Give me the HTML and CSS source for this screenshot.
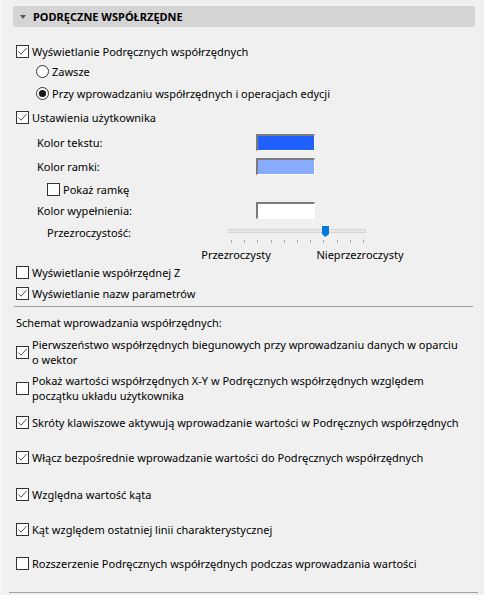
FILE: index.html
```html
<!DOCTYPE html>
<html lang="pl">
<head>
<meta charset="utf-8">
<link rel="stylesheet" href="styles.css">
</head>
<body>
<div class="page">
  <section class="panel">
    <div class="header"><span class="tri"></span><span>PODRĘCZNE WSPÓŁRZĘDNE</span></div>

    <div class="opt cb1">
      <svg class="box" viewBox="0 0 13 13"><rect x=".5" y=".5" width="12" height="12" fill="#fff" stroke="#333"/><path d="M2.5 6.5 5 9.2 10.6 3" fill="none" stroke="#555"/></svg>
      <span>Wyświetlanie Podręcznych współrzędnych</span>
    </div>
    <div class="opt radio r1">
      <svg class="box" viewBox="0 0 13 13"><circle cx="6.5" cy="6.5" r="6" fill="#fff" stroke="#333"/></svg>
      <span>Zawsze</span>
    </div>
    <div class="opt radio r2">
      <svg class="box" viewBox="0 0 13 13"><circle cx="6.5" cy="6.5" r="6" fill="#fff" stroke="#333"/><circle cx="6.5" cy="6.5" r="3.6" fill="#1a1a1a"/></svg>
      <span>Przy wprowadzaniu współrzędnych i operacjach edycji</span>
    </div>
    <div class="opt ustaw">
      <svg class="box" viewBox="0 0 13 13"><rect x=".5" y=".5" width="12" height="12" fill="#fff" stroke="#333"/><path d="M2.5 6.5 5 9.2 10.6 3" fill="none" stroke="#555"/></svg>
      <span>Ustawienia użytkownika</span>
    </div>

    <div class="color-row c1">
      <span class="color-label">Kolor tekstu:</span>
      <span class="swatch swatch-text"></span>
    </div>
    <div class="color-row c2">
      <span class="color-label">Kolor ramki:</span>
      <span class="swatch swatch-frame"></span>
    </div>
    <div class="opt pokaz">
      <svg class="box" viewBox="0 0 13 13"><rect x=".5" y=".5" width="12" height="12" fill="#fff" stroke="#333"/></svg>
      <span>Pokaż ramkę</span>
    </div>
    <div class="color-row c3">
      <span class="color-label">Kolor wypełnienia:</span>
      <span class="swatch swatch-fill"></span>
    </div>

    <div class="slider-row">
      <span class="slider-label">Przezroczystość:</span>
      <div class="slider">
        <div class="track"></div>
        <svg class="thumb" viewBox="0 0 7 11"><path d="M0 0H7V8L3.5 11 0 8Z" fill="#0078d7"/></svg>
        <div class="ticks"><i></i><i></i><i></i><i></i><i></i><i></i><i></i><i></i><i></i><i></i><i></i></div>
      </div>
    </div>
    <div class="captions">
      <span class="cap1">Przezroczysty</span>
      <span class="cap2">Nieprzezroczysty</span>
    </div>

    <div class="opt zrow">
      <svg class="box" viewBox="0 0 13 13"><rect x=".5" y=".5" width="12" height="12" fill="#fff" stroke="#333"/></svg>
      <span>Wyświetlanie współrzędnej Z</span>
    </div>
    <div class="opt nazw">
      <svg class="box" viewBox="0 0 13 13"><rect x=".5" y=".5" width="12" height="12" fill="#fff" stroke="#333"/><path d="M2.5 6.5 5 9.2 10.6 3" fill="none" stroke="#555"/></svg>
      <span>Wyświetlanie nazw parametrów</span>
    </div>

    <div class="sep"></div>

    <div class="schemat">Schemat wprowadzania współrzędnych:</div>

    <div class="opt multi s1">
      <svg class="box" viewBox="0 0 13 13"><rect x=".5" y=".5" width="12" height="12" fill="#fff" stroke="#333"/><path d="M2.5 6.5 5 9.2 10.6 3" fill="none" stroke="#555"/></svg>
      <span>Pierwszeństwo współrzędnych biegunowych przy wprowadzaniu danych w oparciu<br>o wektor</span>
    </div>
    <div class="opt multi s2">
      <svg class="box" viewBox="0 0 13 13"><rect x=".5" y=".5" width="12" height="12" fill="#fff" stroke="#333"/></svg>
      <span>Pokaż wartości współrzędnych X-Y w Podręcznych współrzędnych względem<br>początku układu użytkownika</span>
    </div>
    <div class="opt s3">
      <svg class="box" viewBox="0 0 13 13"><rect x=".5" y=".5" width="12" height="12" fill="#fff" stroke="#333"/><path d="M2.5 6.5 5 9.2 10.6 3" fill="none" stroke="#555"/></svg>
      <span>Skróty klawiszowe aktywują wprowadzanie wartości w Podręcznych współrzędnych</span>
    </div>
    <div class="opt s4">
      <svg class="box" viewBox="0 0 13 13"><rect x=".5" y=".5" width="12" height="12" fill="#fff" stroke="#333"/><path d="M2.5 6.5 5 9.2 10.6 3" fill="none" stroke="#555"/></svg>
      <span>Włącz bezpośrednie wprowadzanie wartości do Podręcznych współrzędnych</span>
    </div>
    <div class="opt s5">
      <svg class="box" viewBox="0 0 13 13"><rect x=".5" y=".5" width="12" height="12" fill="#fff" stroke="#333"/><path d="M2.5 6.5 5 9.2 10.6 3" fill="none" stroke="#555"/></svg>
      <span>Względna wartość kąta</span>
    </div>
    <div class="opt s6">
      <svg class="box" viewBox="0 0 13 13"><rect x=".5" y=".5" width="12" height="12" fill="#fff" stroke="#333"/><path d="M2.5 6.5 5 9.2 10.6 3" fill="none" stroke="#555"/></svg>
      <span>Kąt względem ostatniej linii charakterystycznej</span>
    </div>
    <div class="opt s7">
      <svg class="box" viewBox="0 0 13 13"><rect x=".5" y=".5" width="12" height="12" fill="#fff" stroke="#333"/></svg>
      <span>Rozszerzenie Podręcznych współrzędnych podczas wprowadzania wartości</span>
    </div>
  </section>
  <div class="bottom-sep"></div>
</div>
</body>
</html>
```

FILE: styles.css
```css
* { box-sizing: border-box; }

html, body {
  margin: 0;
  padding: 0;
  background: #f0f0f0;
}

body {
  font-family: "Noto Sans", "Open Sans", sans-serif;
  font-size: 11px;
  color: #000;
}

.page {
  width: 484px;
  height: 595px;
  overflow: hidden;
  border-left: 2px solid #f6f6f6;
}

.panel {
  margin-left: 11px;
  width: 462px;
  padding-top: 6px;
}

.header {
  height: 21px;
  background: #d4d4d4;
  border-radius: 3px;
  display: flex;
  align-items: center;
  padding-left: 7px;
  gap: 7px;
  font-weight: 700;
  font-size: 11px;
}

.tri {
  width: 0;
  height: 0;
  border-left: 3px solid transparent;
  border-right: 3px solid transparent;
  border-top: 4px solid #555;
}

.opt {
  display: flex;
  align-items: center;
  gap: 3px;
  height: 20px;
  padding-left: 3px;
  white-space: nowrap;
}

.box {
  width: 13px;
  height: 13px;
  flex: none;
  display: block;
}

.radio { padding-left: 23px; }

.cb1 { margin-top: 14px; }
.r1 { margin-top: 0; }
.r2 { margin-top: 2px; }
.ustaw { margin-top: 4px; }

.color-row {
  display: flex;
  align-items: center;
  height: 17px;
  padding-left: 24px;
}
.c1 { margin-top: 7px; }
.c2 { margin-top: 7px; }
.c3 { margin-top: 3px; }

.color-label { width: 219px; }

.swatch {
  width: 59px;
  height: 17px;
  border-style: solid;
  border-width: 2px 1px 1px 2px;
  border-color: #7a7a7a #fff #fff #7a7a7a;
}
.swatch-text { background: #2060ff; }
.swatch-frame { background: #88aaff; }
.swatch-fill { background: #fff; }

.pokaz { padding-left: 34px; margin-top: 4px; }

.slider-row {
  display: flex;
  align-items: flex-start;
  margin-top: 7px;
  padding-left: 34px;
}
.slider-label {
  width: 181px;
  height: 14px;
  line-height: 14px;
}
.slider {
  position: relative;
  width: 138px;
  padding-top: 3px;
}
.track {
  height: 4px;
  background: #e7e7e7;
  border: 1px solid #d6d6d6;
}
.thumb {
  position: absolute;
  top: 0;
  left: 94px;
  width: 7px;
  height: 11px;
  display: block;
}
.ticks {
  display: flex;
  justify-content: space-between;
  margin-top: 7px;
  padding: 0 2px 0 3px;
  height: 3px;
}
.ticks i {
  display: block;
  width: 1px;
  height: 3px;
  background: #a8a8a8;
}

.captions {
  display: flex;
  margin-top: 3px;
  height: 16px;
  align-items: center;
  padding-left: 183px;
}
.cap1 { width: 80px; text-align: center; }
.cap2 { width: 100px; margin-left: 34px; text-align: center; }

.zrow { margin-top: 0; }
.nazw { margin-top: 1px; }

.sep {
  height: 1px;
  background: #a0a0a0;
  margin: 3px 2px 0 1px;
}

.schemat {
  height: 20px;
  display: flex;
  align-items: center;
  padding-left: 3px;
  margin-top: 5px;
}

.multi { height: 30px; line-height: 15px; }

.s1 { margin-top: 5px; }
.s2 { margin-top: 6px; }
.s3 { margin-top: 9px; }
.s4 { margin-top: 15px; }
.s5 { margin-top: 17px; }
.s6 { margin-top: 15px; }
.s7 { margin-top: 14px; }

.bottom-sep {
  height: 1px;
  background: #a0a0a0;
  margin: 19px 6px 0 7px;
}
```
